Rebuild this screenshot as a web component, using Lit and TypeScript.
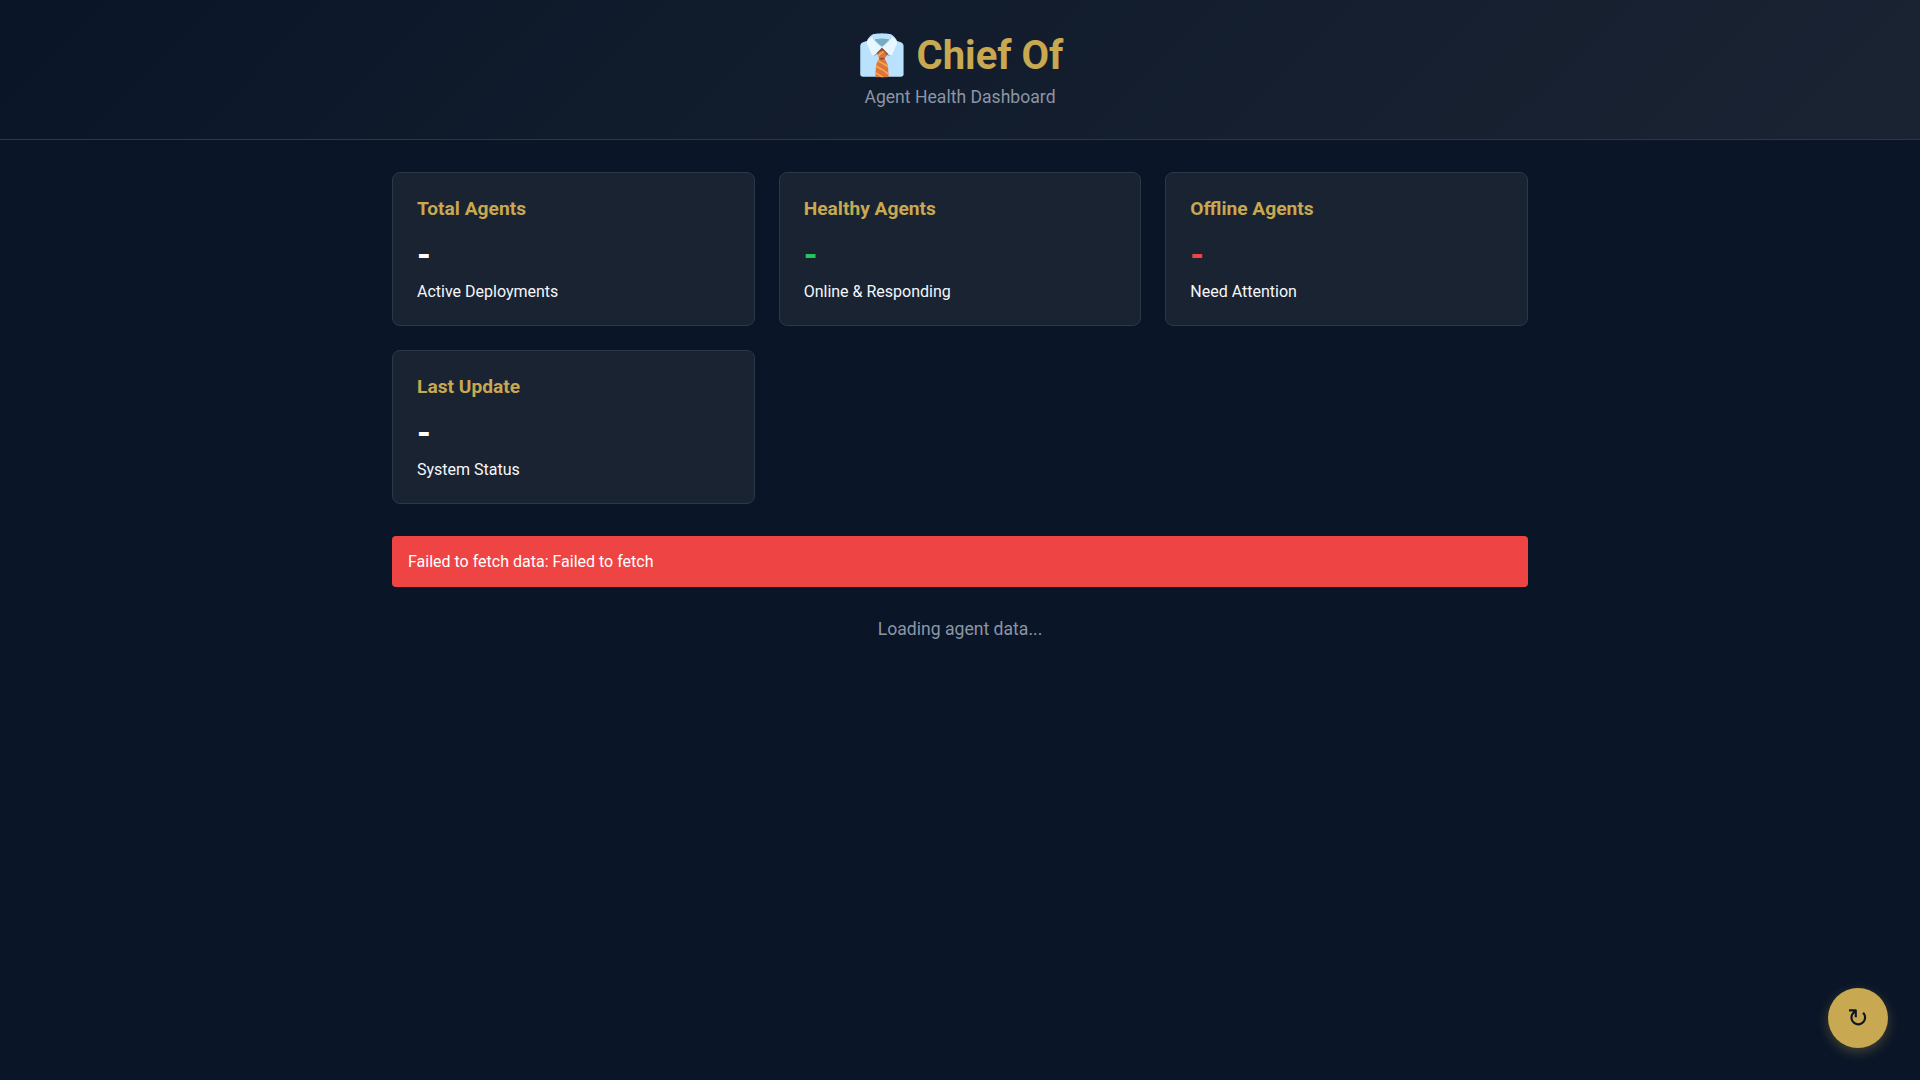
import { LitElement, html, css } from "lit";
import { customElement } from "lit/decorators.js";

@customElement("app-root")
export class AppRoot extends LitElement {
  static styles = css`
    :host { display: block; min-height: 1080px; background: #0a1628; color: #fff; font-family: Roboto, "Liberation Sans", sans-serif; line-height: 1.5; }
    * { box-sizing: border-box; margin: 0; }
    .header { height: 140px; padding: 32px; text-align: center; background: linear-gradient(135deg, #0a1628 0%, #1a2332 100%); border-bottom: 1px solid #2d3748; }
    h1 { font-size: 40px; font-weight: 700; color: #c8a850; line-height: 48px; margin-bottom: 8px; }
    .sub { font-size: 17.6px; color: #8b95a5; line-height: 26px; margin-top: -4px; }
    .container { max-width: 1200px; margin: 0 auto; padding: 32px; }
    .grid { display: grid; grid-template-columns: repeat(3, 1fr); gap: 24px; margin-bottom: 32px; }
    .card { background: #1a2332; border: 1px solid #2d3748; border-radius: 8px; padding: 24px; height: 154px; }
    h3 { font-size: 19.2px; font-weight: 700; color: #c8a850; line-height: 23px; margin-bottom: 16px; }
    .value { font-size: 35.2px; font-weight: 700; line-height: 38px; margin-bottom: 6px; }
    .green { color: #22c55e; }
    .red { color: #ef4444; }
    .label { font-size: 16px; line-height: 24px; color: #f5f7fa; }
    .error { background: #ef4444; color: #fff; padding: 16px; border-radius: 4px; margin-bottom: 13px; font-size: 16px; line-height: 19px; }
    .loading { padding: 16px; text-align: center; color: #8b95a5; font-size: 17.6px; line-height: 26px; }
    .refresh { position: fixed; right: 32px; bottom: 32px; width: 60px; height: 60px; border: none; border-radius: 50%; background: #c8a850; color: #0a1628; font-size: 26px; box-shadow: 0 4px 12px rgba(200,168,80,.3); padding: 0; }
  `;
  render() {
    const cards = [
      ["Total Agents", "", "Active Deployments"],
      ["Healthy Agents", "green", "Online & Responding"],
      ["Offline Agents", "red", "Need Attention"],
      ["Last Update", "", "System Status"],
    ];
    return html`
      <header class="header">
        <h1>👔 Chief Of</h1>
        <p class="sub">Agent Health Dashboard</p>
      </header>
      <main class="container">
        <section class="grid">
          ${cards.map(([t, c, l]) => html`<div class="card"><h3>${t}</h3><div class="value ${c}">-</div><div class="label">${l}</div></div>`)}
        </section>
        <div class="error">Failed to fetch data: Failed to fetch</div>
        <div class="loading">Loading agent data...</div>
      </main>
      <button class="refresh">↻</button>
    `;
  }
}
